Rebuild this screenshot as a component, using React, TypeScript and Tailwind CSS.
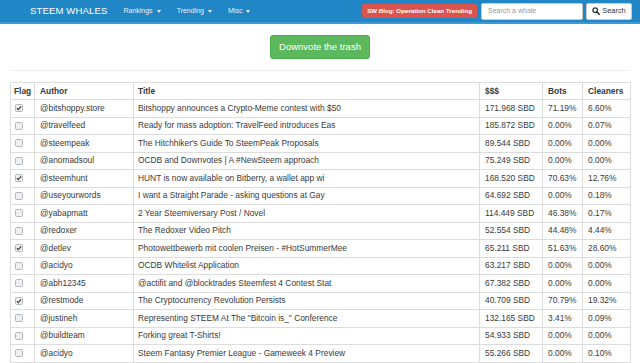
import React from 'react';

interface Post {
  author: string;
  title: string;
  sbd: string;
  bots: string;
  cleaners: string;
  flag?: boolean;
}

const posts: Post[] = [
  { author: '@bitshoppy.store', title: 'Bitshoppy announces a Crypto-Meme contest with $50', sbd: '171.968 SBD', bots: '71.19%', cleaners: '6.60%', flag: true },
  { author: '@travelfeed', title: 'Ready for mass adoption: TravelFeed introduces Eas', sbd: '185.872 SBD', bots: '0.00%', cleaners: '0.07%' },
  { author: '@steempeak', title: "The Hitchhiker's Guide To SteemPeak Proposals", sbd: '89.544 SBD', bots: '0.00%', cleaners: '0.00%' },
  { author: '@anomadsoul', title: 'OCDB and Downvotes | A #NewSteem approach', sbd: '75.249 SBD', bots: '0.00%', cleaners: '0.00%' },
  { author: '@steemhunt', title: 'HUNT is now available on Bitberry, a wallet app wi', sbd: '168.520 SBD', bots: '70.63%', cleaners: '12.76%', flag: true },
  { author: '@useyourwords', title: 'I want a Straight Parade - asking questions at Gay', sbd: '64.692 SBD', bots: '0.00%', cleaners: '0.18%' },
  { author: '@yabapmatt', title: '2 Year Steemiversary Post / Novel', sbd: '114.449 SBD', bots: '46.38%', cleaners: '0.17%' },
  { author: '@redoxer', title: 'The Redoxer Video Pitch', sbd: '52.554 SBD', bots: '44.48%', cleaners: '4.44%' },
  { author: '@detlev', title: 'Photowettbewerb mit coolen Preisen - #HotSummerMee', sbd: '65.211 SBD', bots: '51.63%', cleaners: '28.60%', flag: true },
  { author: '@acidyo', title: 'OCDB Whitelist Application', sbd: '63.217 SBD', bots: '0.00%', cleaners: '0.00%' },
  { author: '@abh12345', title: '@actifit and @blocktrades Steemfest 4 Contest Stat', sbd: '67.382 SBD', bots: '0.00%', cleaners: '0.00%' },
  { author: '@restmode', title: 'The Cryptocurrency Revolution Persists', sbd: '40.709 SBD', bots: '70.79%', cleaners: '19.32%', flag: true },
  { author: '@justineh', title: 'Representing STEEM At The "Bitcoin is_" Conference', sbd: '132.165 SBD', bots: '3.41%', cleaners: '0.09%' },
  { author: '@buildteam', title: 'Forking great T-Shirts!', sbd: '54.933 SBD', bots: '0.00%', cleaners: '0.00%' },
  { author: '@acidyo', title: 'Steem Fantasy Premier League - Gameweek 4 Preview', sbd: '55.266 SBD', bots: '0.00%', cleaners: '0.10%' },
];

function Caret() {
  return (
    <span className="inline-block w-0 h-0 ml-[4px] align-middle border-x-[2.5px] border-t-[3px] border-x-transparent border-t-[#e6f0f8]" />
  );
}

function Checkbox({ checked }: { checked?: boolean }) {
  return (
    <svg width="8" height="8" viewBox="0 0 8 8" className="block">
      <rect x="0.5" y="0.5" width="7" height="7" rx="1.2" fill="#eef0f2" stroke="#b3b7bb" />
      {checked && <path d="M1.9 4.2 L3.3 5.6 L6.1 2.3" fill="none" stroke="#444" strokeWidth="1.3" />}
    </svg>
  );
}

export default function App() {
  const cell = 'border border-[#ddd] align-middle whitespace-nowrap overflow-hidden';
  return (
    <div className="w-[640px] h-[363px] overflow-hidden bg-white text-[#3a3a3a] font-['Liberation_Sans',Arial,sans-serif]">
      <nav className="h-[24px] bg-[#2086c6] border-b-[2px] border-[#3b9ad6] flex items-center pl-[30px] pr-[8px]">
        <span className="text-white text-[9.6px] mr-[16px] tracking-[0.1px]">STEEM WHALES</span>
        <span className="text-[#e6f0f8] text-[7px] flex items-center">Rankings<Caret /></span>
        <span className="text-[#e6f0f8] text-[7px] ml-[16px] flex items-center">Trending<Caret /></span>
        <span className="text-[#e6f0f8] text-[7px] ml-[16px] flex items-center">Misc<Caret /></span>
        <div className="ml-auto flex items-center">
          <span className="h-[14px] px-[5px] bg-[#d9534f] rounded-[2px] text-white font-bold text-[6.2px] flex items-center">SW Blog: Operation Clean Trending</span>
          <span className="ml-[4px] w-[102px] h-[17px] bg-white rounded-[2px] border border-[#ccc] text-[#999] text-[7px] flex items-center pl-[6px]">Search a whale</span>
          <span className="ml-[3px] h-[17px] w-[46px] bg-white rounded-[2px] border border-[#ccc] text-[#333] text-[7.4px] flex items-center justify-center gap-[2px]">
            <svg width="8" height="8" viewBox="0 0 8 8">
              <circle cx="3.2" cy="3.2" r="2.3" fill="none" stroke="#333" strokeWidth="1.3" />
              <path d="M4.9 4.9 L7.2 7.2" stroke="#333" strokeWidth="1.6" strokeLinecap="round" />
            </svg>
            Search
          </span>
        </div>
      </nav>

      <div className="flex justify-center mt-[11px]">
        <button className="w-[100px] h-[24px] bg-[#5cb85c] border border-[#4cae4c] rounded-[3px] text-white text-[9.5px]">
          Downvote the trash
        </button>
      </div>

      <div className="mx-[10px] mt-[11px] border-t border-[#eee]" />

      <table className="mx-[10px] mt-[11px] w-[620px] table-fixed border-collapse text-[8.4px]">
        <colgroup>
          <col className="w-[24px]" />
          <col className="w-[99px]" />
          <col className="w-[346px]" />
          <col className="w-[63px]" />
          <col className="w-[40px]" />
          <col className="w-[48px]" />
        </colgroup>
        <thead>
          <tr className="h-[17px]">
            <th className={`${cell} text-left font-bold pl-[3px]`}>Flag</th>
            <th className={`${cell} text-left font-bold pl-[5px]`}>Author</th>
            <th className={`${cell} text-left font-bold pl-[4px]`}>Title</th>
            <th className={`${cell} text-left font-bold pl-[5px]`}>$$$</th>
            <th className={`${cell} text-left font-bold pl-[5px]`}>Bots</th>
            <th className={`${cell} text-left font-bold pl-[5px]`}>Cleaners</th>
          </tr>
        </thead>
        <tbody>
          {posts.map((p, i) => (
            <tr key={i} className="h-[17.5px]">
              <td className={`${cell} pl-[4px]`}>
                <Checkbox checked={p.flag} />
              </td>
              <td className={`${cell} pl-[5px]`}>{p.author}</td>
              <td className={`${cell} pl-[4px]`}>{p.title}</td>
              <td className={`${cell} pl-[5px]`}>{p.sbd}</td>
              <td className={`${cell} pl-[5px]`}>{p.bots}</td>
              <td className={`${cell} pl-[5px]`}>{p.cleaners}</td>
            </tr>
          ))}
        </tbody>
      </table>
    </div>
  );
}
